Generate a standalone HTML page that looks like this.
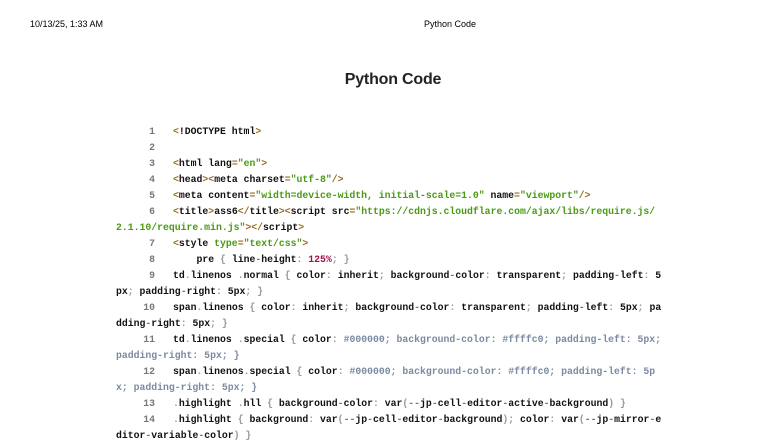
<!DOCTYPE html>
<html><head><meta charset="utf-8"><style>
body{margin:0;width:784px;height:441px;background:#fff;overflow:hidden;position:relative;font-family:"Liberation Sans",sans-serif}
.hd{position:absolute;top:19px;font-size:9px;color:#000}
h1{position:absolute;left:0;width:786px;top:71px;margin:0;text-align:center;font-size:16px;font-weight:bold;color:#222;letter-spacing:-0.2px}
.code{position:absolute;left:116px;top:124px;font-family:"Liberation Mono",monospace;font-size:9.8px;font-weight:bold;line-height:16px;color:#111;white-space:pre}
.ln{display:inline-block;width:39px;text-align:right;color:#777;margin-right:18px}
.t{color:#9a6a1c}.s{color:#4a9a14}.p{color:#999}.n{color:#a0104a}.h{color:#7b8aa0}.o{color:#b06a20}
</style></head><body>
<div class="hd" style="left:30px">10/13/25, 1:33 AM</div>
<div class="hd" style="left:424px">Python Code</div>
<h1>Python Code</h1>
<div class="code"><div><span class="ln">1</span><span class="t">&lt;</span>!DOCTYPE html<span class="t">&gt;</span></div><div><span class="ln">2</span></div><div><span class="ln">3</span><span class="t">&lt;</span>html lang<span class="t">=</span><span class="s">"en"</span><span class="t">&gt;</span></div><div><span class="ln">4</span><span class="t">&lt;</span>head<span class="t">&gt;&lt;</span>meta charset<span class="t">=</span><span class="s">"utf-8"</span><span class="t">/&gt;</span></div><div><span class="ln">5</span><span class="t">&lt;</span>meta content<span class="t">=</span><span class="s">"width=device-width, initial-scale=1.0"</span> name<span class="t">=</span><span class="s">"viewport"</span><span class="t">/&gt;</span></div><div><span class="ln">6</span><span class="t">&lt;</span>title<span class="t">&gt;</span>ass6<span class="t">&lt;/</span>title<span class="t">&gt;&lt;</span>script src<span class="t">=</span><span class="s">"https://cdnjs.cloudflare.com/ajax/libs/require.js/</span></div><div><span class="s">2.1.10/require.min.js"</span><span class="t">&gt;&lt;/</span>script<span class="t">&gt;</span></div><div><span class="ln">7</span><span class="t">&lt;</span>style <span class="s">type</span><span class="t">=</span><span class="s">"text/css"</span><span class="t">&gt;</span></div><div><span class="ln">8</span>    pre <span class="p">{</span> line<span class="o">-</span>height<span class="p">:</span> <span class="n">125%</span><span class="p">;</span> <span class="p">}</span></div><div><span class="ln">9</span>td<span class="p">.</span>linenos <span class="p">.</span>normal <span class="p">{</span> color<span class="p">:</span> inherit<span class="p">;</span> background<span class="o">-</span>color<span class="p">:</span> transparent<span class="p">;</span> padding<span class="o">-</span>left<span class="p">:</span> 5</div><div>px<span class="p">;</span> padding<span class="o">-</span>right<span class="p">:</span> 5px<span class="p">;</span> <span class="p">}</span></div><div><span class="ln">10</span>span<span class="p">.</span>linenos <span class="p">{</span> color<span class="p">:</span> inherit<span class="p">;</span> background<span class="o">-</span>color<span class="p">:</span> transparent<span class="p">;</span> padding<span class="o">-</span>left<span class="p">:</span> 5px<span class="p">;</span> pa</div><div>dding<span class="o">-</span>right<span class="p">:</span> 5px<span class="p">;</span> <span class="p">}</span></div><div><span class="ln">11</span>td<span class="p">.</span>linenos <span class="p">.</span>special <span class="p">{</span> color<span class="p">:</span> <span class="h">#000000; background-color: #ffffc0; padding-left: 5px;</span></div><div><span class="h">padding-right: 5px; }</span></div><div><span class="ln">12</span>span<span class="p">.</span>linenos<span class="p">.</span>special <span class="p">{</span> color<span class="p">:</span> <span class="h">#000000; background-color: #ffffc0; padding-left: 5p</span></div><div><span class="h">x; padding-right: 5px; }</span></div><div><span class="ln">13</span><span class="p">.</span>highlight <span class="p">.</span>hll <span class="p">{</span> background<span class="o">-</span>color<span class="p">:</span> var<span class="p">(</span><span class="o">--</span>jp<span class="o">-</span>cell<span class="o">-</span>editor<span class="o">-</span>active<span class="o">-</span>background<span class="p">)</span> <span class="p">}</span></div><div><span class="ln">14</span><span class="p">.</span>highlight <span class="p">{</span> background<span class="p">:</span> var<span class="p">(</span><span class="o">--</span>jp<span class="o">-</span>cell<span class="o">-</span>editor<span class="o">-</span>background<span class="p">);</span> color<span class="p">:</span> var<span class="p">(</span><span class="o">--</span>jp<span class="o">-</span>mirror<span class="o">-</span>e</div><div>ditor<span class="o">-</span>variable<span class="o">-</span>color<span class="p">)</span> <span class="p">}</span></div></div>
</body></html>
